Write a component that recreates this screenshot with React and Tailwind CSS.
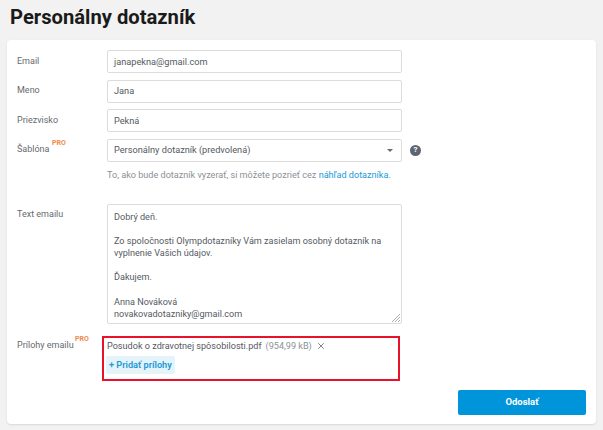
import { X } from 'lucide-react';

const font = "font-['Roboto','Noto_Sans',sans-serif]";

function Label({ children, pro, left }) {
    return (
        <div className="w-[100px] shrink-0 pl-[10px] text-[9px] text-[#666b70] relative">
            {children}
            {pro && <span className={`absolute text-[7px] font-bold text-[#f08a4b] leading-none -top-[3px] ${left}`}>PRO</span>}
        </div>
    );
}

function Field({ label, value }) {
    return (
        <div className="flex items-center">
            <Label>{label}</Label>
            <div className="w-[295px] h-[23px] border border-[#dcdcdc] rounded-[2px] px-[6px] flex items-center text-[9.2px] text-[#555a5f]">
                {value}
            </div>
        </div>
    );
}

export default function App() {
    return (
        <div className={`w-[603px] h-[430px] overflow-hidden bg-[#f2f2f2] ${font}`}>
            <h1 className="h-[40px] pl-[10px] pt-[4px] text-[20.2px] leading-[27px] font-bold text-[#1a1a1a]">Personálny dotazník</h1>
            <div className="mx-[7px] w-[589px] h-[384px] bg-white rounded-[4px] shadow-[0_1px_2px_#d8d8d8] pt-[10px]">
                <div className="flex flex-col gap-[6.5px]">
                    <Field label="Email" value="janapekna@gmail.com" />
                    <Field label="Meno" value="Jana" />
                    <Field label="Priezvisko" value="Pekná" />
                    <div className="flex items-center">
                        <Label pro left="left-[45px]">Šablóna</Label>
                        <div className="w-[295px] h-[23px] border border-[#dcdcdc] rounded-[2px] pl-[6px] pr-[8px] flex items-center justify-between text-[9.2px] text-[#555a5f]">
                            Personálny dotazník (predvolená)
                            <span className="w-0 h-0 border-x-[3px] border-x-transparent border-t-[3px] border-t-[#666b70]" />
                        </div>
                        <span className="ml-[8px] w-[11px] h-[11px] rounded-full bg-[#5f6470] text-white text-[8px] font-bold flex items-center justify-center">?</span>
                    </div>
                </div>
                <p className="ml-[100px] mt-[7px] text-[9.1px] leading-[13px] text-[#8c9196]">
                    To, ako bude dotazník vyzerať, si môžete pozrieť cez <span className="text-[#1a9ad6]">náhľad dotazníka.</span>
                </p>
                <div className="flex mt-[22px]">
                    <div className="pt-[4px]"><Label>Text emailu</Label></div>
                    <div className="relative w-[295px] h-[120px] border border-[#dcdcdc] rounded-[2px] px-[6px] pt-[6px] text-[9.1px] leading-[12.2px] text-[#555a5f]">
                        <p>Dobrý deň.</p>
                        <p className="mt-[12.2px]">Zo spoločnosti Olympdotazníky Vám zasielam osobný dotazník na vyplnenie Vašich údajov.</p>
                        <p className="mt-[12.2px]">Ďakujem.</p>
                        <p className="mt-[12.2px]">Anna Nováková</p>
                        <p>novakovadotazniky@gmail.com</p>
                        <svg className="absolute right-0 bottom-0" width="10" height="10" viewBox="0 0 10 10" stroke="#999" strokeWidth="0.8">
                            <path d="M1 9 9 1M4 9 9 4M7 9 9 7" />
                        </svg>
                    </div>
                </div>
                <div className="flex mt-[12px]">
                    <div className="w-[95px] pt-[3px]"><Label pro left="left-[68px]">Prílohy emailu</Label></div>
                    <div className="w-[298px] h-[45px] border-2 border-[#e8132a] pl-[3px] pt-[1px]">
                        <div className="flex items-center text-[9.1px] leading-[14px] text-[#555a5f]">
                            Posudok o zdravotnej spôsobilosti.pdf
                            <span className="ml-[4px] text-[#8c9196]">(954,99 kB)</span>
                            <X size={10} strokeWidth={2} className="ml-[4px] text-[#666b70]" />
                        </div>
                        <div className="mt-[3px] w-fit h-[18px] px-[3px] -ml-[1px] rounded-[2px] bg-[#e5f3fa] flex items-center text-[9.2px] font-semibold text-[#1a9ad6]">
                            + Pridať prílohy
                        </div>
                    </div>
                </div>
                <div className="flex justify-end mt-[9px] pr-[10px]">
                    <button className="w-[128px] h-[25px] rounded-[2px] bg-[#0094da] text-white text-[9.5px] font-bold">Odoslať</button>
                </div>
            </div>
        </div>
    );
}
